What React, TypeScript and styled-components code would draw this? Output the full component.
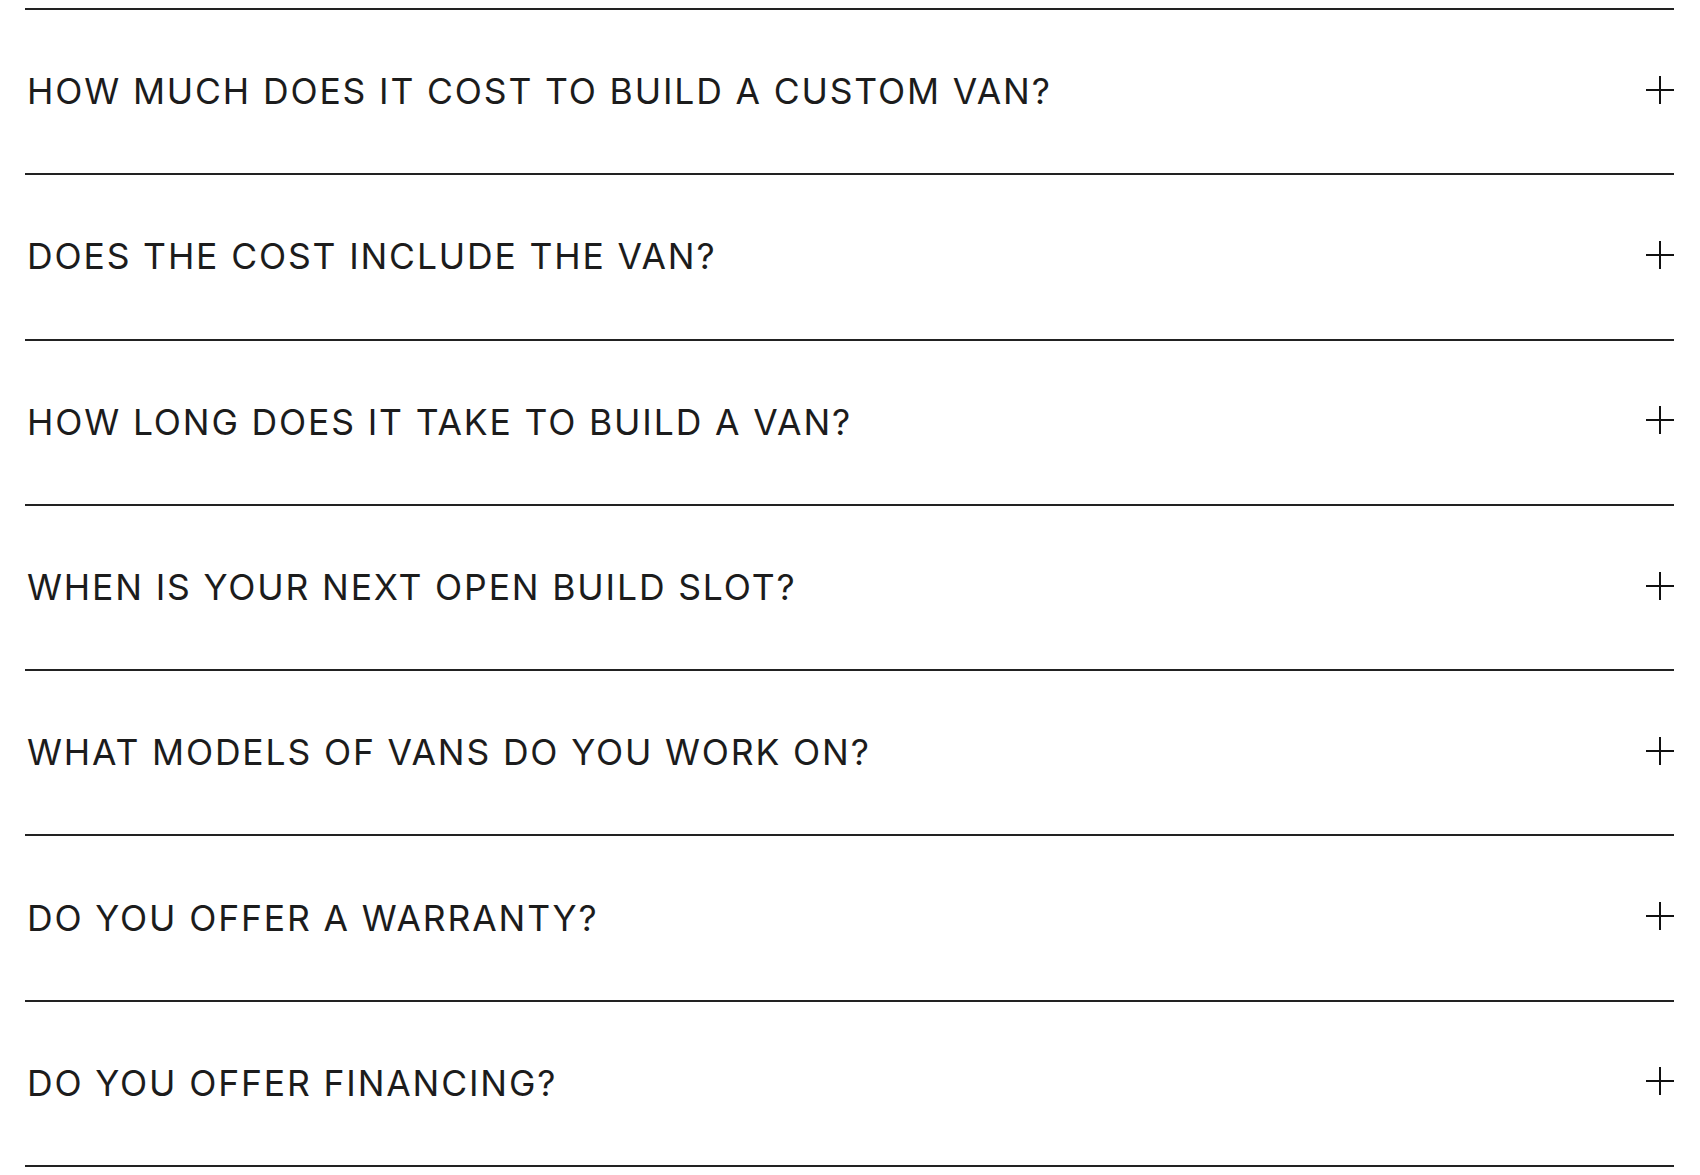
import styled, { createGlobalStyle } from 'styled-components';

const questions = [
  'HOW MUCH DOES IT COST TO BUILD A CUSTOM VAN?',
  'DOES THE COST INCLUDE THE VAN?',
  'HOW LONG DOES IT TAKE TO BUILD A VAN?',
  'WHEN IS YOUR NEXT OPEN BUILD SLOT?',
  'WHAT MODELS OF VANS DO YOU WORK ON?',
  'DO YOU OFFER A WARRANTY?',
  'DO YOU OFFER FINANCING?',
];

const GlobalStyle = createGlobalStyle`
  body {
    margin: 0;
    background: #fff;
    font-family: Inter, 'Liberation Sans', sans-serif;
  }
`;

const PlusIcon = () => (
  <svg width="28" height="28" viewBox="0 0 28 28">
    <path d="M14 0v28M0 14h28" stroke="#111" strokeWidth="2" fill="none" />
  </svg>
);

const App = () => {
  return (
    <>
      <GlobalStyle />
      <Page>
        <FaqList>
          {questions.map((q) => (
            <FaqItem key={q}>
              <Question>{q}</Question>
              <Toggle aria-label="Expand">
                <PlusIcon />
              </Toggle>
            </FaqItem>
          ))}
        </FaqList>
      </Page>
    </>
  );
};

const Page = styled.div`
  padding: 8px 26px 0 25px;
`;

const FaqList = styled.ul`
  list-style: none;
  margin: 0;
  padding: 0;
  border-top: 2px solid #222;
`;

const FaqItem = styled.li`
  display: flex;
  align-items: center;
  justify-content: space-between;
  height: 163.3px;
  border-bottom: 2px solid #222;
`;

const Question = styled.span`
  padding-left: 2px;
  font-size: 35.5px;
  font-weight: 400;
  letter-spacing: 1.85px;
  color: #1c1c1c;
`;

const Toggle = styled.button`
  display: flex;
  padding: 0;
  border: 0;
  background: none;
  margin-top: -4px;
`;

export default App;
